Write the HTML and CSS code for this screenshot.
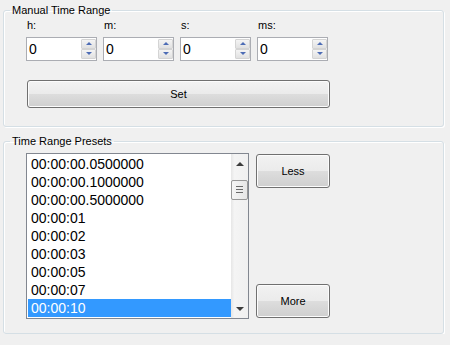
FILE: index.html
```html
<!DOCTYPE html>
<html lang="en">
  <head>
    <meta charset="UTF-8" />
    <meta name="viewport" content="width=device-width, initial-scale=1.0" />
    <title>Time Range</title>
    <link rel="stylesheet" href="styles.css">
  </head>
  <body>
    <fieldset class="group group-manual">
      <legend>Manual Time Range</legend>
      <div class="fields">
        <div class="field">
          <label>h:</label>
          <div class="spin">
            <span class="spin-value">0</span>
            <div class="spin-buttons">
              <span class="spin-btn up"></span>
              <span class="spin-btn down"></span>
            </div>
          </div>
        </div>
        <div class="field">
          <label>m:</label>
          <div class="spin">
            <span class="spin-value">0</span>
            <div class="spin-buttons">
              <span class="spin-btn up"></span>
              <span class="spin-btn down"></span>
            </div>
          </div>
        </div>
        <div class="field">
          <label>s:</label>
          <div class="spin">
            <span class="spin-value">0</span>
            <div class="spin-buttons">
              <span class="spin-btn up"></span>
              <span class="spin-btn down"></span>
            </div>
          </div>
        </div>
        <div class="field">
          <label>ms:</label>
          <div class="spin">
            <span class="spin-value">0</span>
            <div class="spin-buttons">
              <span class="spin-btn up"></span>
              <span class="spin-btn down"></span>
            </div>
          </div>
        </div>
      </div>
      <button class="btn btn-set">Set</button>
    </fieldset>

    <fieldset class="group group-presets">
      <legend>Time Range Presets</legend>
      <div class="presets">
        <div class="listbox">
          <ul class="items">
            <li>00:00:00.0500000</li>
            <li>00:00:00.1000000</li>
            <li>00:00:00.5000000</li>
            <li>00:00:01</li>
            <li>00:00:02</li>
            <li>00:00:03</li>
            <li>00:00:05</li>
            <li>00:00:07</li>
            <li class="selected">00:00:10</li>
          </ul>
          <div class="scrollbar">
            <span class="scroll-arrow up"></span>
            <div class="scroll-track">
              <span class="scroll-thumb"></span>
            </div>
            <span class="scroll-arrow down"></span>
          </div>
        </div>
        <div class="side-buttons">
          <button class="btn btn-side">Less</button>
          <button class="btn btn-side">More</button>
        </div>
      </div>
    </fieldset>
  </body>
</html>
```

FILE: styles.css
```css
body {
  margin: 0;
  padding: 2px 6px 0 3px;
  background-color: #f0f0f0;
  font-family: "Liberation Sans", Arial, sans-serif;
  font-size: 11px;
  color: #000;
}

.group {
  margin: 0;
  padding: 0 0 0 6px;
  border: 1px solid #d5dfe5;
  border-radius: 3px;
  box-shadow: inset 1px 1px 0 #fff, 1px 1px 0 #fff;
  min-width: 0;
}

.group legend {
  padding: 0 2px;
  line-height: 16px;
}

.group-manual {
  padding-bottom: 18px;
}

.group-presets {
  margin-top: 6px;
  padding-bottom: 14px;
}

/* champs h / m / s / ms */
.fields {
  display: grid;
  grid-template-columns: repeat(4, 71px);
  column-gap: 6px;
  padding-left: 16px;
}

.field label {
  display: block;
  margin-top: 1px;
  line-height: 13px;
  padding-left: 1px;
}

.spin {
  display: flex;
  height: 22px;
  margin-top: 5px;
  border: 1px solid #abadb3;
  background-color: #fff;
}

.spin-value {
  flex: 1;
  padding-left: 2px;
  font-size: 14px;
  line-height: 22px;
}

.spin-buttons {
  display: flex;
  flex-direction: column;
  width: 15px;
  padding: 1px 0;
}

.spin-btn {
  position: relative;
  flex: 1;
  border: 1px solid #d4d4d4;
  border-radius: 1px;
  background: linear-gradient(#f4f4f4, #e1e1e1);
}

.spin-btn + .spin-btn {
  margin-top: 0;
}

.spin-btn::after {
  content: "";
  position: absolute;
  left: 4px;
  top: 2px;
  border-left: 3px solid transparent;
  border-right: 3px solid transparent;
}

.spin-btn.up::after {
  border-bottom: 3px solid #4d6cb5;
}

.spin-btn.down::after {
  border-top: 3px solid #4d6cb5;
}

/* boutons */
.btn {
  font-family: inherit;
  font-size: 11px;
  color: #000;
  border: 1px solid #707070;
  border-radius: 3px;
  background: linear-gradient(#f2f2f2 0%, #ebebeb 50%, #dddddd 51%, #cfcfcf 100%);
  box-shadow: inset 0 0 0 1px #fcfcfc;
  padding: 0;
  cursor: pointer;
}

.btn-set {
  display: block;
  width: 303px;
  height: 28px;
  margin: 19px 0 0 17px;
}

/* liste des préréglages */
.presets {
  display: flex;
  padding-left: 16px;
  margin-top: 4px;
}

.listbox {
  display: flex;
  width: 221px;
  border: 1px solid #828790;
  background-color: #fff;
}

.items {
  flex: 1;
  list-style: none;
  margin: 0;
  padding: 1px 0 1px 1px;
  font-size: 14px;
}

.items li {
  height: 18px;
  line-height: 18px;
  padding-left: 3px;
}

.items li.selected {
  background-color: #3399ff;
  color: #fff;
}

.scrollbar {
  display: flex;
  flex-direction: column;
  width: 17px;
  background: linear-gradient(to right, #e6e6e6, #f4f4f4 20%, #f0f0f0);
}

.scroll-arrow {
  position: relative;
  height: 17px;
}

.scroll-arrow::after {
  content: "";
  position: absolute;
  left: 5px;
  border-left: 4px solid transparent;
  border-right: 4px solid transparent;
}

.scroll-arrow.up::after {
  top: 8px;
  border-bottom: 4px solid #3c3c3c;
}

.scroll-arrow.down::after {
  top: 6px;
  border-top: 4px solid #3c3c3c;
}

.scroll-track {
  flex: 1;
  padding-top: 9px;
}

.scroll-thumb {
  display: block;
  height: 18px;
  border: 1px solid #979797;
  border-radius: 2px;
  background:
    linear-gradient(#6a6a6a, #6a6a6a) 4px 5px / 7px 1px no-repeat,
    linear-gradient(#6a6a6a, #6a6a6a) 4px 8px / 7px 1px no-repeat,
    linear-gradient(#6a6a6a, #6a6a6a) 4px 11px / 7px 1px no-repeat,
    linear-gradient(to right, #f5f5f5, #e6e6e6);
}

.side-buttons {
  display: flex;
  flex-direction: column;
  justify-content: space-between;
  margin-left: 7px;
  padding: 1px 0;
}

.btn-side {
  width: 74px;
  height: 34px;
}
```
